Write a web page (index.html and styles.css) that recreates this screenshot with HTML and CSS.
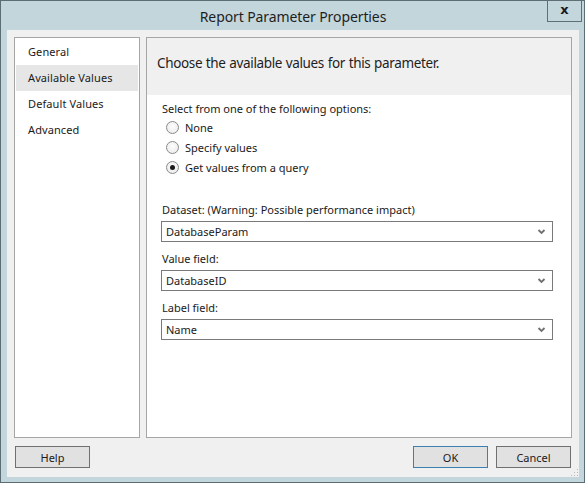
FILE: index.html
```html
<!DOCTYPE html>
<html>
<head>
<meta charset="utf-8">
<link rel="stylesheet" href="styles.css">
</head>
<body>
<div class="window">
  <div class="titlebar">
    <span class="title">Report Parameter Properties</span>
    <div class="close">x</div>
  </div>
  <div class="client">
    <div class="main">
      <div class="nav">
        <div class="nav-item">General</div>
        <div class="nav-item selected">Available Values</div>
        <div class="nav-item">Default Values</div>
        <div class="nav-item">Advanced</div>
      </div>
      <div class="panel">
        <div class="panel-head">Choose the available values for this parameter.</div>
        <div class="panel-body">
          <div class="label">Select from one of the following options:</div>
          <div class="radios">
            <div class="radio-row"><span class="radio"></span><span>None</span></div>
            <div class="radio-row"><span class="radio"></span><span>Specify values</span></div>
            <div class="radio-row"><span class="radio checked"></span><span>Get values from a query</span></div>
          </div>
          <div class="field first">
            <div class="label">Dataset: (Warning: Possible performance impact)</div>
            <div class="combo"><span>DatabaseParam</span><svg class="chev" width="9" height="6" viewBox="0 0 9 6"><path d="M1.5 1 L4.5 4 L7.5 1" fill="none" stroke="#707070" stroke-width="1.8"/></svg></div>
          </div>
          <div class="field">
            <div class="label">Value field:</div>
            <div class="combo"><span>DatabaseID</span><svg class="chev" width="9" height="6" viewBox="0 0 9 6"><path d="M1.5 1 L4.5 4 L7.5 1" fill="none" stroke="#707070" stroke-width="1.8"/></svg></div>
          </div>
          <div class="field">
            <div class="label">Label field:</div>
            <div class="combo"><span>Name</span><svg class="chev" width="9" height="6" viewBox="0 0 9 6"><path d="M1.5 1 L4.5 4 L7.5 1" fill="none" stroke="#707070" stroke-width="1.8"/></svg></div>
          </div>
        </div>
      </div>
    </div>
    <div class="footer">
      <div class="btn">Help</div>
      <div class="spacer"></div>
      <div class="btn default">OK</div>
      <div class="btn">Cancel</div>
    </div>
    <div class="grip"></div>
  </div>
</div>
</body>
</html>
```

FILE: styles.css
```css
html, body {
  margin: 0;
  padding: 0;
  background: #c3d6dc;
}
body {
  width: 585px;
  height: 483px;
  font-family: "Noto Sans", "Open Sans", sans-serif;
  font-size: 11px;
  color: #1a1a1a;
}
.window {
  box-sizing: border-box;
  width: 585px;
  height: 483px;
  border: 1px solid #5b6e76;
  background: #c3d6dc;
  padding: 0 5px 5px 6px;
  display: flex;
  flex-direction: column;
}
.titlebar {
  height: 29px;
  position: relative;
  display: flex;
  align-items: center;
  justify-content: center;
}
.title {
  font-size: 14px;
  color: #1e1e1e;
  margin-top: 1px;
  letter-spacing: -0.1px;
}
.close {
  position: absolute;
  right: -3px;
  top: -1px;
  width: 35px;
  height: 22px;
  border: 1px solid #5f6f75;
  box-sizing: border-box;
  display: flex;
  align-items: center;
  justify-content: center;
  font-family: "DejaVu Sans", sans-serif;
  font-weight: bold;
  font-size: 13px;
  line-height: 1;
  padding-bottom: 3px;
}
.client {
  flex: 1;
  background: #f0f0f0;
  padding: 7px 7px 0 7px;
  display: flex;
  flex-direction: column;
  position: relative;
}
.main {
  display: flex;
  gap: 6px;
  height: 401px;
}
.nav {
  box-sizing: border-box;
  width: 126px;
  background: #fff;
  border: 1px solid #a6a6a6;
  padding: 1px 1px;
}
.nav-item {
  height: 26px;
  line-height: 26px;
  padding-left: 12px;
  letter-spacing: 0.1px;
}
.nav-item.selected {
  background: #e6e6e6;
}
.panel {
  box-sizing: border-box;
  flex: 1;
  border: 1px solid #a6a6a6;
  background: #fff;
  display: flex;
  flex-direction: column;
}
.panel-head {
  background: #f0f0f0;
  height: 57px;
  box-sizing: border-box;
  padding: 16px 0 0 10px;
  font-size: 13.5px;
  letter-spacing: -0.35px;
  word-spacing: 0.5px;
  color: #1e1e1e;
}
.panel-body {
  padding: 6px 18px 0 14px;
}
.label {
  height: 16px;
  line-height: 16px;
  padding-left: 1px;
}
.radios {
  padding-top: 0;
}
.radio-row {
  display: flex;
  align-items: center;
  height: 20px;
  padding-left: 5px;
}
.radio {
  box-sizing: border-box;
  width: 13px;
  height: 13px;
  border-radius: 50%;
  border: 1px solid #8a8a8a;
  background: radial-gradient(circle at 50% 40%, #fdfdfd, #e8e8e8);
  margin-right: 6px;
  position: relative;
}
.radio.checked::after {
  content: "";
  position: absolute;
  left: 3px;
  top: 3px;
  width: 5px;
  height: 5px;
  border-radius: 50%;
  background: #1a1a1a;
}
.field {
  margin-top: 9px;
}
.field.first {
  margin-top: 25px;
}
.combo {
  box-sizing: border-box;
  height: 21px;
  margin-top: 3px;
  border: 1px solid #7a7a7a;
  display: flex;
  align-items: center;
  justify-content: space-between;
  padding: 0 6px 0 4px;
}
.chev {
  display: block;
}
.footer {
  display: flex;
  gap: 8px;
  margin-top: 8px;
  padding-left: 1px;
  padding-right: 1px;
}
.spacer {
  flex: 1;
}
.btn {
  box-sizing: border-box;
  width: 75px;
  height: 22px;
  border: 1px solid #707070;
  background: #e1e1e1;
  display: flex;
  align-items: center;
  justify-content: center;
}
.btn.default {
  border-color: #3c7fb1;
}
.grip {
  position: absolute;
  right: 1px;
  bottom: 1px;
  width: 8px;
  height: 8px;
  background:
    radial-gradient(circle, #b8b8b8 0.8px, transparent 1px) 0 0 / 3px 3px;
  clip-path: polygon(100% 0, 100% 100%, 0 100%);
}
```
